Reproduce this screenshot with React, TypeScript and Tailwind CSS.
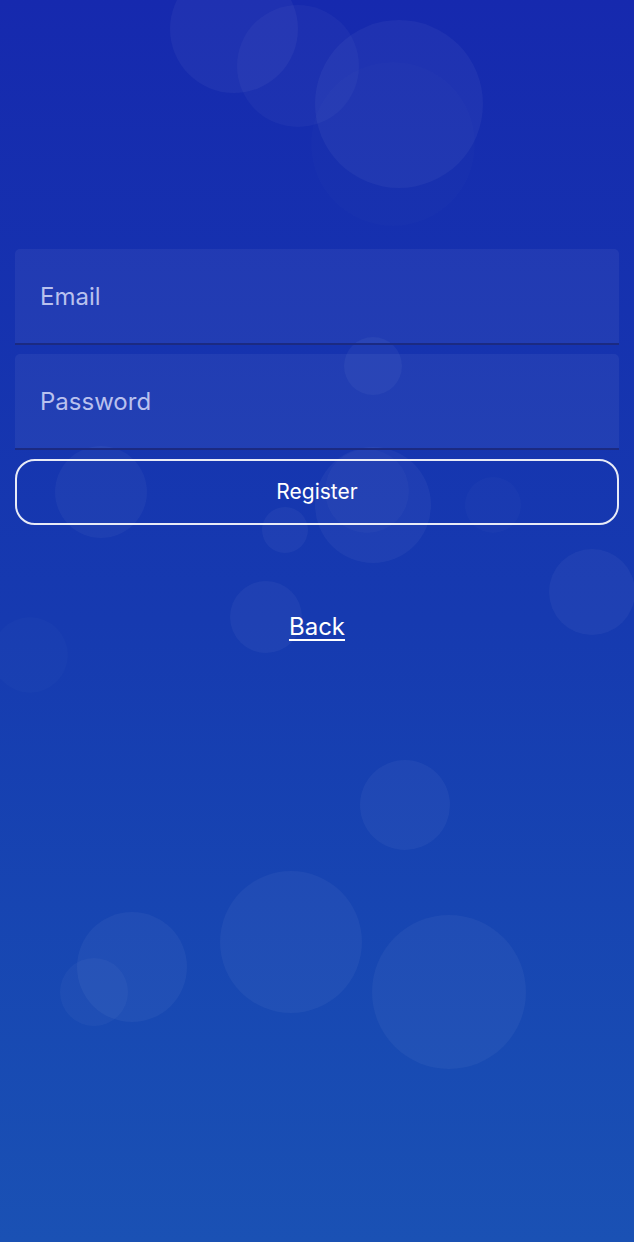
import { useState } from "react";

const bubbles = [
  { x: 234, y: 29, r: 64, o: 0.04 },
  { x: 298, y: 66, r: 61, o: 0.03 },
  { x: 399, y: 104, r: 84, o: 0.04 },
  { x: 393, y: 144, r: 82, o: 0.012 },
  { x: 373, y: 366, r: 29, o: 0.04 },
  { x: 101, y: 492, r: 46, o: 0.035 },
  { x: 373, y: 505, r: 58, o: 0.04 },
  { x: 367, y: 491, r: 42, o: 0.025 },
  { x: 285, y: 530, r: 23, o: 0.04 },
  { x: 493, y: 505, r: 28, o: 0.02 },
  { x: 592, y: 592, r: 43, o: 0.04 },
  { x: 266, y: 617, r: 36, o: 0.04 },
  { x: 30, y: 655, r: 38, o: 0.015 },
  { x: 405, y: 805, r: 45, o: 0.04 },
  { x: 291, y: 942, r: 71, o: 0.04 },
  { x: 132, y: 967, r: 55, o: 0.04 },
  { x: 94, y: 992, r: 34, o: 0.03 },
  { x: 449, y: 992, r: 77, o: 0.04 },
];

export default function App() {
  const [email, setEmail] = useState("");
  const [password, setPassword] = useState("");

  return (
    <div
      className="relative w-[634px] h-[1242px] overflow-hidden bg-gradient-to-b from-[#1629ae] via-[#163ab0] to-[#1a51b4]"
      style={{ fontFamily: "Inter, 'Open Sans', sans-serif" }}
    >
      {/* soft bokeh circles in the background */}
      <div className="absolute inset-0 pointer-events-none">
        {bubbles.map((b, i) => (
          <div
            key={i}
            className="absolute rounded-full bg-white"
            style={{
              left: b.x - b.r,
              top: b.y - b.r,
              width: b.r * 2,
              height: b.r * 2,
              opacity: b.o,
            }}
          />
        ))}
      </div>

      <div className="relative flex flex-col px-[15px] pt-[249px]">
        <div className="flex flex-col gap-[9px]">
          <input
            type="email"
            value={email}
            onChange={e => setEmail(e.target.value)}
            placeholder="Email"
            className="h-[96px] w-full rounded-t-[5px] bg-white/[0.05] border-b-2 border-[#1b2a82] px-[25px] text-[24px] text-white placeholder:text-[#b9c1ee] outline-none"
          />
          <input
            type="password"
            value={password}
            onChange={e => setPassword(e.target.value)}
            placeholder="Password"
            className="h-[96px] w-full rounded-t-[5px] bg-white/[0.05] border-b-2 border-[#1b2a82] px-[25px] text-[24px] text-white placeholder:text-[#b9c1ee] outline-none"
          />
          <button className="h-[66px] w-full rounded-[20px] border-2 border-white/90 text-[21px] text-white">
            Register
          </button>
        </div>

        <div className="flex justify-center mt-[86px]">
          <a href="#" className="text-[24px] leading-[32px] text-white underline underline-offset-[4px]">
            Back
          </a>
        </div>
      </div>
    </div>
  );
}
